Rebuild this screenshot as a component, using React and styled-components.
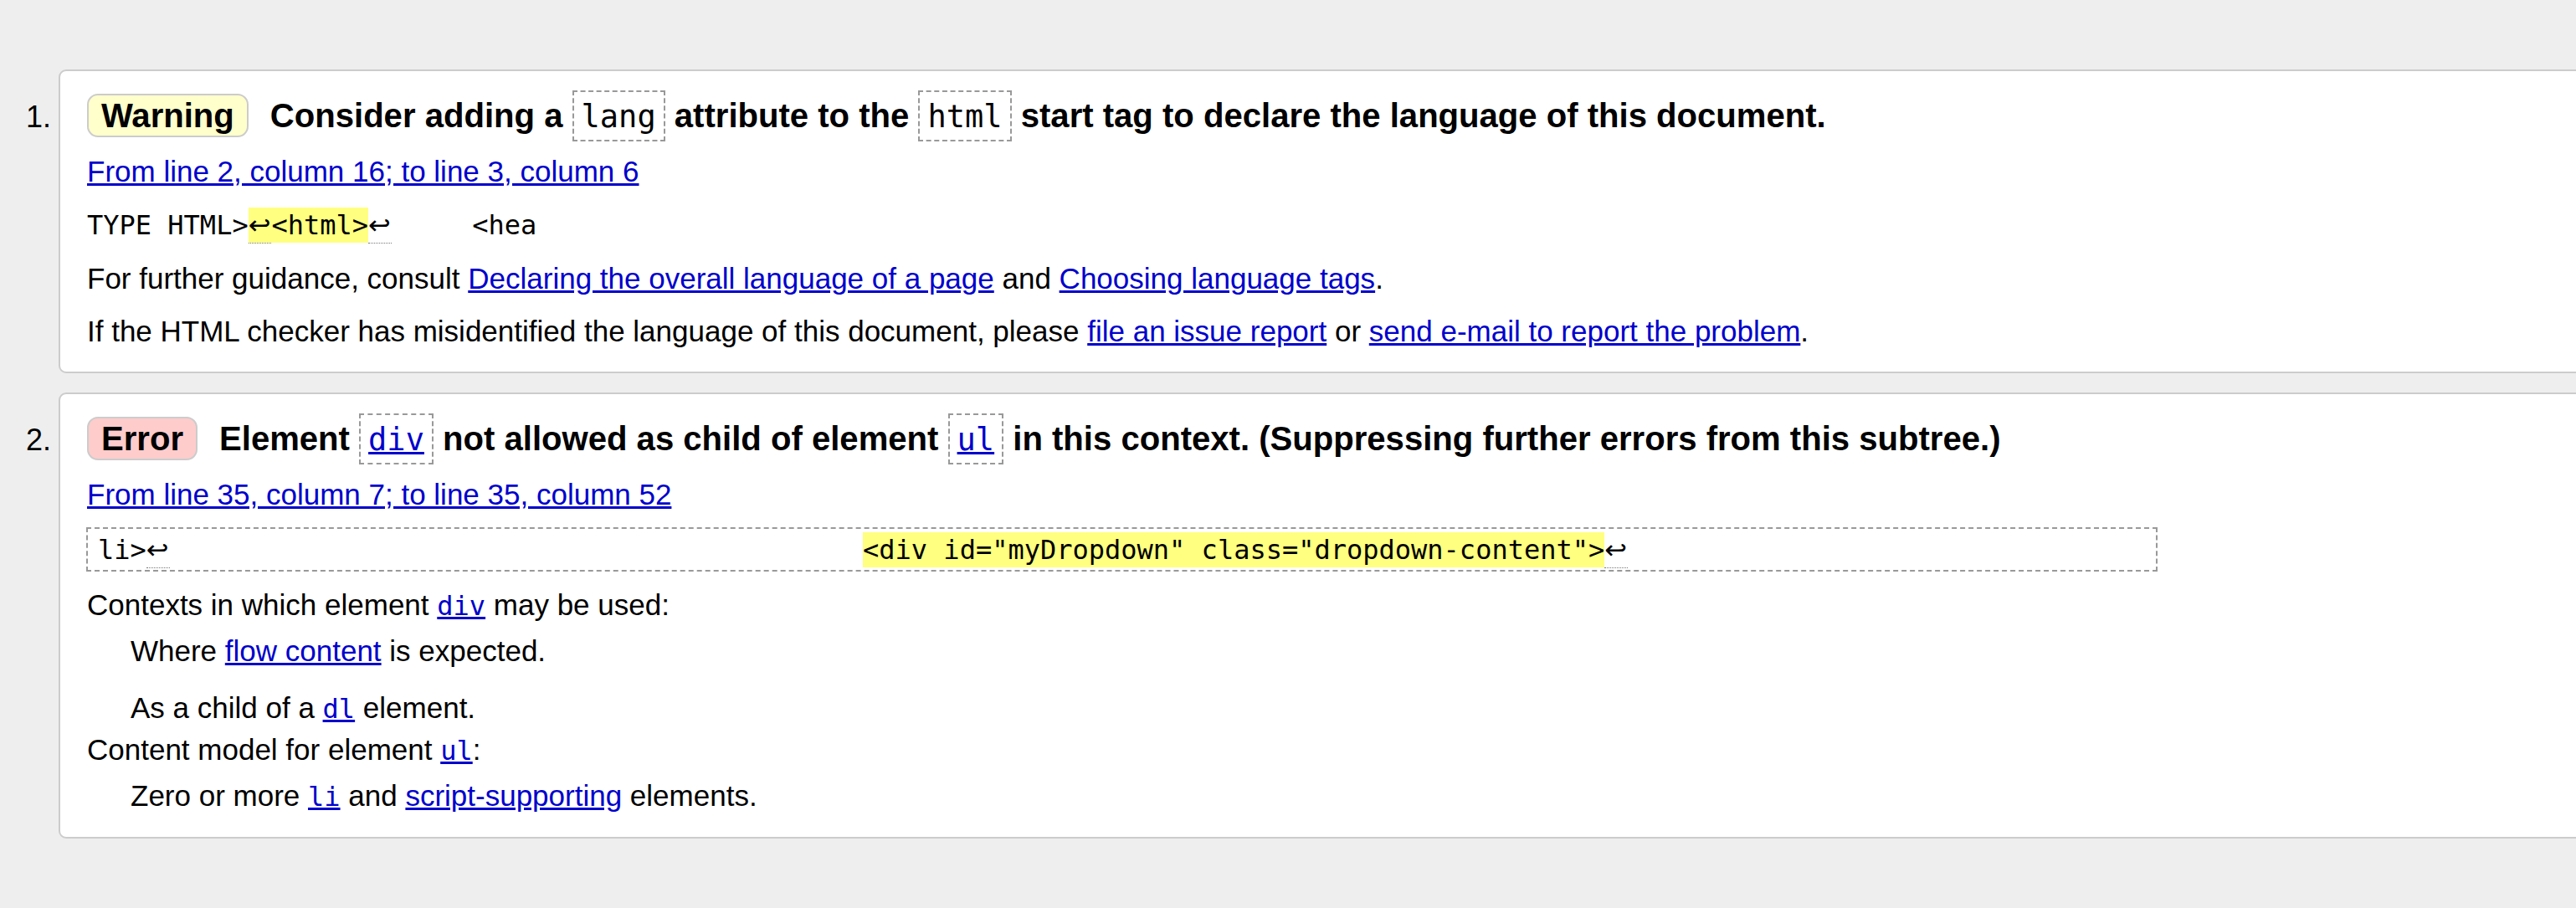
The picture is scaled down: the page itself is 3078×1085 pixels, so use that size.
import React from 'react';
import styled, { createGlobalStyle, css } from 'styled-components';

const Global = createGlobalStyle`
  html, body { margin: 0; padding: 0; background: #eeeeee; }
  body {
    font-family: "Liberation Sans", Arial, sans-serif;
    color: #000;
    overflow: hidden;
  }
`;

const Page = styled.div`
  box-sizing: border-box;
  min-height: 100vh;
  padding: 83px 0 60px;
  overflow: hidden;
`;

const List = styled.ol`
  margin: 0;
  padding: 0;
  list-style: none;
  display: flex;
  flex-direction: column;
  gap: 23px;
`;

const Item = styled.li`
  display: flex;
  align-items: baseline;
`;

const Num = styled.span`
  flex: 0 0 70px;
  box-sizing: border-box;
  text-align: right;
  padding-right: 9px;
  font-size: 36px;
`;

const Card = styled.div`
  flex: 1 0 auto;
  margin-right: -40px;
  background: #fff;
  border: 2px solid #cccccc;
  border-radius: 9px;
  padding: 23px 32px ${p => p.$pb}px;
`;

const Heading = styled.p`
  margin: 0;
  font-size: 40.1px;
  font-weight: bold;
  line-height: 61px;
  white-space: nowrap;
`;

const Badge = styled.strong`
  display: inline-block;
  line-height: 44px;
  padding: 2px 15px;
  margin-right: 26px;
  border: 2px solid #cccccc;
  border-radius: 13px;
  background: ${p => (p.$kind === 'error' ? '#ffcccc' : '#ffffcc')};
`;

const HeadCode = styled.code`
  font-family: "DejaVu Sans Mono", monospace;
  font-weight: normal;
  font-size: 37px;
  line-height: 1;
  border: 2px dashed #999999;
  padding: 8px 9px 6px;
`;

const Para = styled.p`
  margin: ${p => p.$mt || 0}px 0 0 ${p => p.$indent || 0}px;
  font-size: 35px;
  line-height: 40px;
  white-space: nowrap;
`;

const Link = styled.a`
  color: #0000cc;
  text-decoration: underline;
`;

const Code = styled.code`
  font-family: "DejaVu Sans Mono", monospace;
  font-size: 32px;
  line-height: 1;
`;

const Extract = styled.p`
  margin: ${p => p.$mt || 0}px 0 0;
  font-family: "DejaVu Sans Mono", monospace;
  font-size: 32px;
  line-height: 40px;
  white-space: pre;
  ${p =>
    p.$boxed &&
    css`
      box-sizing: border-box;
      width: 2475px;
      margin-left: -1px;
      border: 2px dashed #999999;
      padding: 5px 12px 4px;
    `}
`;

const Mark = styled.mark`
  background: #ffff80;
  color: inherit;
  padding: 2px 0;
`;

const Ret = styled.span`
  font-family: "DejaVu Sans", sans-serif;
  letter-spacing: 1px;
  padding-bottom: 2px;
  border-bottom: 1px dotted #777777;
`;

export default function App() {
  return (
    <>
      <Global />
      <Page>
        <List>
          <Item>
            <Num>1.</Num>
            <Card $pb={28}>
              <Heading>
                <Badge $kind="warning">Warning</Badge>
                Consider adding a <HeadCode>lang</HeadCode> attribute to the{' '}
                <HeadCode>html</HeadCode> start tag to declare the language of this document.
              </Heading>
              <Para $mt={16}>
                <Link href="#l2">From line 2, column 16; to line 3, column 6</Link>
              </Para>
              <Extract $mt={24}>
                {'TYPE HTML>'}
                <Mark>
                  <Ret>↩</Ret>
                  {'<html>'}
                </Mark>
                <Ret>↩</Ret>
                {'     <hea'}
              </Extract>
              <Para $mt={24}>
                For further guidance, consult{' '}
                <Link href="#decl">Declaring the overall language of a page</Link> and{' '}
                <Link href="#tags">Choosing language tags</Link>.
              </Para>
              <Para $mt={23}>
                If the HTML checker has misidentified the language of this document, please{' '}
                <Link href="#issue">file an issue report</Link> or{' '}
                <Link href="#mail">send e-mail to report the problem</Link>.
              </Para>
            </Card>
          </Item>
          <Item>
            <Num>2.</Num>
            <Card $pb={29}>
              <Heading>
                <Badge $kind="error">Error</Badge>
                Element{' '}
                <HeadCode>
                  <Link href="#div">div</Link>
                </HeadCode>{' '}
                not allowed as child of element{' '}
                <HeadCode>
                  <Link href="#ul">ul</Link>
                </HeadCode>{' '}
                in this context. (Suppressing further errors from this subtree.)
              </Heading>
              <Para $mt={16}>
                <Link href="#l35">From line 35, column 7; to line 35, column 52</Link>
              </Para>
              <Extract $mt={19} $boxed>
                {'li>'}
                <Ret>↩</Ret>
                {' '.repeat(43)}
                <Mark>{'<div id="myDropdown" class="dropdown-content">'}</Mark>
                <Ret>↩</Ret>
              </Extract>
              <Para $mt={20}>
                Contexts in which element{' '}
                <Code>
                  <Link href="#div">div</Link>
                </Code>{' '}
                may be used:
              </Para>
              <Para $mt={15} $indent={52}>
                Where <Link href="#flow">flow content</Link> is expected.
              </Para>
              <Para $mt={28} $indent={52}>
                As a child of a{' '}
                <Code>
                  <Link href="#dl">dl</Link>
                </Code>{' '}
                element.
              </Para>
              <Para $mt={10}>
                Content model for element{' '}
                <Code>
                  <Link href="#ul">ul</Link>
                </Code>
                :
              </Para>
              <Para $mt={15} $indent={52}>
                Zero or more{' '}
                <Code>
                  <Link href="#li">li</Link>
                </Code>{' '}
                and <Link href="#script">script-supporting</Link> elements.
              </Para>
            </Card>
          </Item>
        </List>
      </Page>
    </>
  );
}
